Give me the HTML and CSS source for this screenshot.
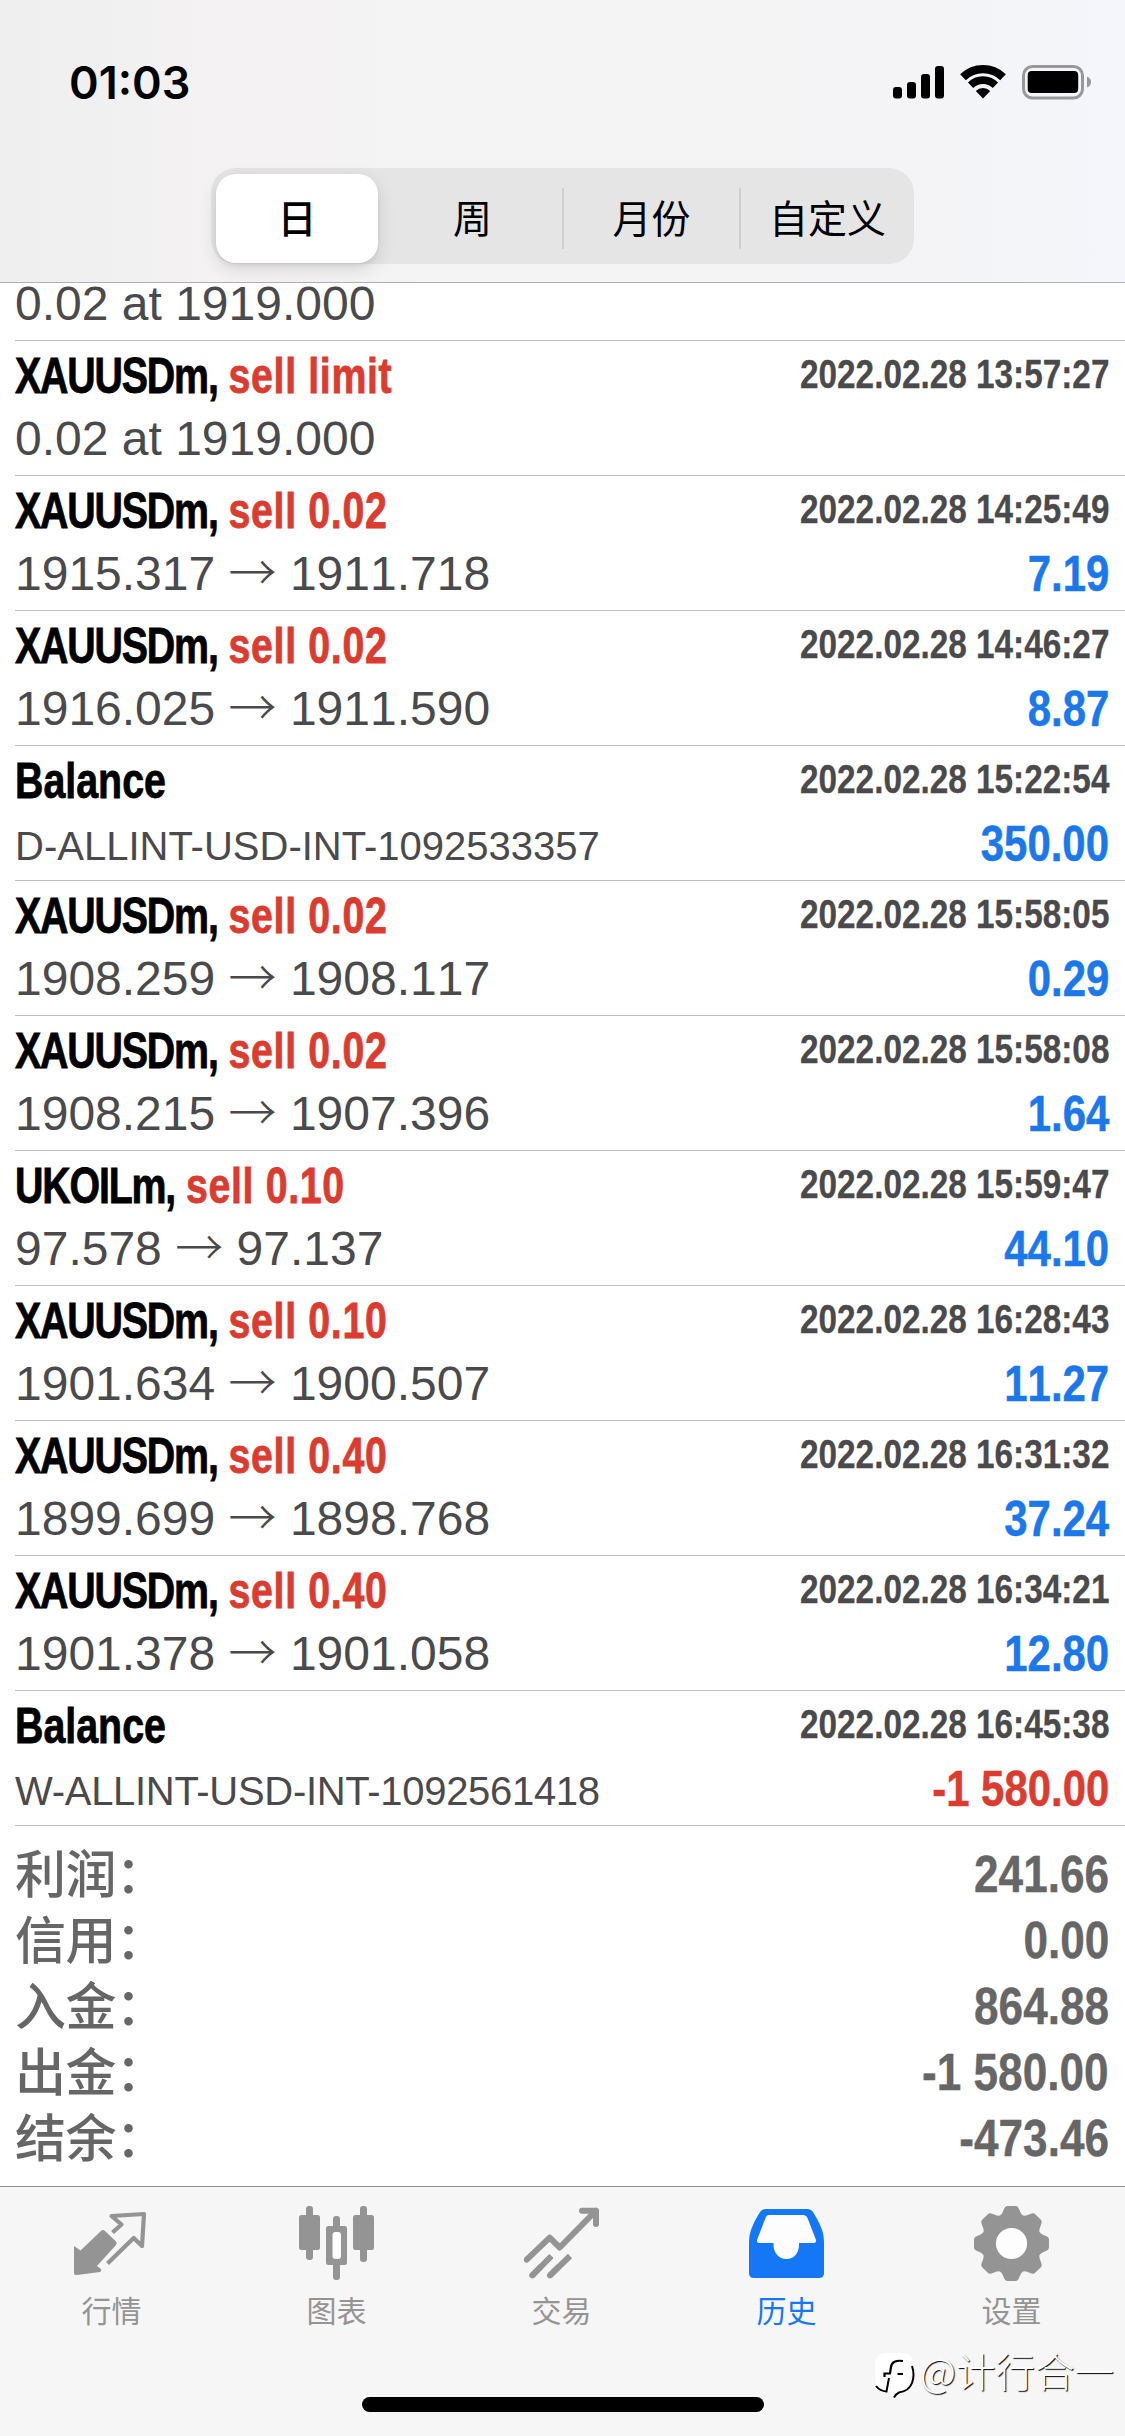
FILE: index.html
```html
<!DOCTYPE html>
<html lang="zh-CN">
<head>
<meta charset="utf-8">
<title>历史</title>
<link rel="stylesheet" href="styles.css">
</head>
<body>
<div class="screen">
  <header class="header">
    <div class="status">
      <span class="clock">01:03</span>
      <svg class="status-icons" width="200" height="35" viewBox="0 0 200 35">
        <rect x="0" y="22" width="9" height="11.500" rx="3"/>
        <rect x="14" y="17" width="9" height="16.500" rx="3"/>
        <rect x="28" y="9" width="9" height="24.500" rx="3"/>
        <rect x="42" y="1" width="9" height="32.500" rx="3"/>
        <g fill="none" stroke="#000">
          <path stroke-width="8.200" d="M70 12.300A28.800 28.800 0 0 1 110 12.300"/>
          <path stroke-width="7.600" d="M77.600 20.200A17.800 17.800 0 0 1 102.400 20.200"/>
        </g>
        <path d="M90 33.500L82.800 26A10.300 10.300 0 0 1 97.200 26Z"/>
        <rect x="130.500" y="1.500" width="59" height="31.500" rx="9" fill="none" stroke="#98989a" stroke-width="3"/>
        <rect x="134.700" y="6" width="50.500" height="22" rx="4"/>
        <path d="M194 11.500Q198 13 198 17T194 22.500Z" fill="#98989a"/>
      </svg>
    </div>
    <nav class="segments">
      <span class="segment active">日</span>
      <span class="segment">周</span>
      <span class="segment divided">月份</span>
      <span class="segment divided">自定义</span>
    </nav>
  </header>

  <main class="content">
    <ul class="deals">
      <li class="deal">
        <div class="top"></div>
        <div class="bottom"><span class="price">0.02 at 1919.000</span></div>
      </li>
      <li class="deal">
        <div class="top"><span class="title"><b>XAUUSDm,</b> <i>sell limit</i></span><time>2022.02.28 13:57:27</time></div>
        <div class="bottom"><span class="price">0.02 at 1919.000</span></div>
      </li>
      <li class="deal">
        <div class="top"><span class="title"><b>XAUUSDm,</b> <i>sell 0.02</i></span><time>2022.02.28 14:25:49</time></div>
        <div class="bottom"><span class="price">1915.317 <em>→</em> 1911.718</span><span class="value">7.19</span></div>
      </li>
      <li class="deal">
        <div class="top"><span class="title"><b>XAUUSDm,</b> <i>sell 0.02</i></span><time>2022.02.28 14:46:27</time></div>
        <div class="bottom"><span class="price">1916.025 <em>→</em> 1911.590</span><span class="value">8.87</span></div>
      </li>
      <li class="deal">
        <div class="top"><span class="title">Balance</span><time>2022.02.28 15:22:54</time></div>
        <div class="bottom"><span class="comment">D-ALLINT-USD-INT-1092533357</span><span class="value">350.00</span></div>
      </li>
      <li class="deal">
        <div class="top"><span class="title"><b>XAUUSDm,</b> <i>sell 0.02</i></span><time>2022.02.28 15:58:05</time></div>
        <div class="bottom"><span class="price">1908.259 <em>→</em> 1908.117</span><span class="value">0.29</span></div>
      </li>
      <li class="deal">
        <div class="top"><span class="title"><b>XAUUSDm,</b> <i>sell 0.02</i></span><time>2022.02.28 15:58:08</time></div>
        <div class="bottom"><span class="price">1908.215 <em>→</em> 1907.396</span><span class="value">1.64</span></div>
      </li>
      <li class="deal">
        <div class="top"><span class="title"><b>UKOILm,</b> <i>sell 0.10</i></span><time>2022.02.28 15:59:47</time></div>
        <div class="bottom"><span class="price">97.578 <em>→</em> 97.137</span><span class="value">44.10</span></div>
      </li>
      <li class="deal">
        <div class="top"><span class="title"><b>XAUUSDm,</b> <i>sell 0.10</i></span><time>2022.02.28 16:28:43</time></div>
        <div class="bottom"><span class="price">1901.634 <em>→</em> 1900.507</span><span class="value">11.27</span></div>
      </li>
      <li class="deal">
        <div class="top"><span class="title"><b>XAUUSDm,</b> <i>sell 0.40</i></span><time>2022.02.28 16:31:32</time></div>
        <div class="bottom"><span class="price">1899.699 <em>→</em> 1898.768</span><span class="value">37.24</span></div>
      </li>
      <li class="deal">
        <div class="top"><span class="title"><b>XAUUSDm,</b> <i>sell 0.40</i></span><time>2022.02.28 16:34:21</time></div>
        <div class="bottom"><span class="price">1901.378 <em>→</em> 1901.058</span><span class="value">12.80</span></div>
      </li>
      <li class="deal">
        <div class="top"><span class="title">Balance</span><time>2022.02.28 16:45:38</time></div>
        <div class="bottom"><span class="comment withdrawal">W-ALLINT-USD-INT-1092561418</span><span class="value loss">-1 580.00</span></div>
      </li>
    </ul>
    <dl class="summary">
      <div class="total"><dt>利润：</dt><dd>241.66</dd></div>
      <div class="total"><dt>信用：</dt><dd>0.00</dd></div>
      <div class="total"><dt>入金：</dt><dd>864.88</dd></div>
      <div class="total"><dt>出金：</dt><dd>-1 580.00</dd></div>
      <div class="total"><dt>结余：</dt><dd>-473.46</dd></div>
    </dl>
  </main>

  <footer class="footer">
    <nav class="tabs">
      <a class="tab">
        <svg width="75" height="75" viewBox="0 0 75 75">
          <path fill="currentColor" d="M0 40L6.500 44.500L27 25Q29 23 31 25L42 35.500Q43.500 37 42 39L23 60L27 63Q28 65 26 66L3 69Q0 69.500 0 67Z"/>
          <path fill="none" stroke="currentColor" stroke-width="4.200" stroke-linejoin="round" d="M38.500 26.500L47.500 18.500L37.500 10L70 8L68 40L59.700 32L33.500 57.500"/>
        </svg>
        <span>行情</span>
      </a>
      <a class="tab">
        <svg width="75" height="75" viewBox="0 0 75 75" fill="currentColor">
          <rect x="7" y="0" width="7" height="54" rx="3"/><rect x="0" y="9" width="21" height="35" rx="2.500"/>
          <rect x="34" y="10" width="7" height="64" rx="3"/><rect x="27" y="20" width="21" height="39" rx="2.500"/>
          <rect x="33.500" y="26" width="8.500" height="27" rx="3" fill="#fdfdfd"/>
          <rect x="61" y="0" width="7" height="56" rx="3"/><rect x="54" y="9" width="21" height="35" rx="2.500"/>
        </svg>
        <span>图表</span>
      </a>
      <a class="tab">
        <svg width="75" height="75" viewBox="24 16 75 75" fill="none" stroke="currentColor" stroke-width="6" stroke-linecap="round" stroke-linejoin="round">
          <path d="M26.700 69.700L49.700 47.700L59.700 57.500L96 20.700M82 20.700H96V34"/>
          <path stroke-linecap="butt" d="M32.300 85.300L51.500 66M50 85.300L70 66"/>
          <path d="M32.300 85.300L40 77.500M50 85.300L58 77.500"/>
        </svg>
        <span>交易</span>
      </a>
      <a class="tab current">
        <svg width="75" height="75" viewBox="0 -3 75 75">
          <path fill="currentColor" d="M17 0H58Q62 0 64 3C70 13 75 22 75 33V64Q75 69 70 69H5Q0 69 0 64V33C0 22 5 13 11 3Q13 0 17 0Z"/>
          <path fill="#fdfdfd" d="M20 6H54Q57 6 58.500 9L67 31Q67.500 34 64 34H50V36C50 44 45 50 37.500 50C30 50 24.500 44 24.500 36V34H11Q7.500 34 8 31L16.500 9Q17.500 6 20 6Z"/>
        </svg>
        <span>历史</span>
      </a>
      <a class="tab">
        <svg width="75" height="75" viewBox="-37.500 -37.500 75 75" fill="currentColor">
          <defs><path id="tooth" d="M-12.500 -26.500L-11 -28.500Q-9.500 -29.500 -8.800 -31.500L-7 -35.500Q-6 -37.500 -4 -37.500H4Q6 -37.500 7 -35.500L8.800 -31.500Q9.500 -29.500 11 -28.500L12.500 -26.500Z"/></defs>
          <circle r="29.500"/>
          <use href="#tooth"/><use href="#tooth" transform="rotate(45)"/><use href="#tooth" transform="rotate(90)"/><use href="#tooth" transform="rotate(135)"/>
          <use href="#tooth" transform="rotate(180)"/><use href="#tooth" transform="rotate(225)"/><use href="#tooth" transform="rotate(270)"/><use href="#tooth" transform="rotate(315)"/>
          <circle r="15.600" fill="#fdfdfd"/>
        </svg>
        <span>设置</span>
      </a>
    </nav>
    <div class="home-bar"></div>
  </footer>

  <div class="watermark">
    <svg width="42" height="50" viewBox="0 0 42 50">
      <path fill="#fff" d="M12 0H28Q38 0 38 12V28Q38 37 28 39Q22 40 20 45L16 39L10 38Q0 36 0 26V12Q0 0 12 0Z"/>
      <g fill="none" stroke="#000">
        <path stroke-width="2" d="M37 13Q40 22 37 30Q34 38 24 39.500Q21 41 19 44.500"/>
        <path stroke-width="2" d="M1 33Q5 38 11.500 38.500L14 25"/>
        <path stroke-width="2.200" d="M28 8Q17 6.500 16 14L15 20.500H9.500V24M22.500 21H28"/>
      </g>
    </svg>
    <span>@计行合一</span>
  </div>
</div>
</body>
</html>
```

FILE: styles.css
```css
* {
  box-sizing: border-box;
  margin: 0;
  padding: 0;
}

body {
  background: #fff;
  font-family: "Liberation Sans", "Noto Sans CJK SC", sans-serif;
}

.screen {
  position: relative;
  display: flex;
  flex-direction: column;
  width: 1125px;
  height: 2436px;
  overflow: hidden;
  background: #fff;
}

/* Status bar and period switch */
.header {
  height: 283px;
  flex: none;
  border-bottom: 1px solid #b0b0b1;
  background: linear-gradient(90deg, #efefef, #f4f2f3 20%, #f4f4f4 45%, #f4f4f6 80%, #f4f6fb);
}

.status {
  display: flex;
  justify-content: space-between;
  height: 168px;
  padding: 65px 32px 0 69px;
}

.clock {
  font: 600 45px/35px Inter, sans-serif;
}

.segments {
  display: grid;
  grid-template-columns: 172px 179px 177px 175px;
  width: 703px;
  height: 96px;
  margin-left: 211px;
  border-radius: 25px;
  background: #e5e5e6;
}

.segment {
  display: flex;
  align-items: center;
  justify-content: center;
  padding-bottom: 5px;
  font: 400 39px/56px "Noto Sans CJK SC", sans-serif;
}

.segment.divided {
  margin: 20px 0;
  border-left: 2px solid #d0d0d2;
}

.segment.active {
  margin: 6px 5px;
  border-radius: 20px;
  background: #fff;
  font-weight: 500;
  box-shadow: 0 6px 18px rgba(0, 0, 0, .12), 0 3px 4px rgba(0, 0, 0, .06);
}

/* Deal history */
.content {
  height: 1903px;
  flex: none;
  overflow: hidden;
}

.deals {
  margin: -77px 0 0 15px;
  list-style: none;
}

.deal {
  height: 135px;
  border-bottom: 1px solid #bfbfc1;
  padding-right: 16px;
  color: #4a4a4d;
}

.top,
.bottom {
  display: flex;
  justify-content: space-between;
  white-space: nowrap;
}

.top {
  height: 68px;
}

.bottom {
  height: 66px;
}

.title {
  transform: scaleX(.787);
  transform-origin: left;
  color: #000;
  font-size: 50px;
  font-weight: 700;
  line-height: 70px;
  -webkit-text-stroke: .8px;
}

.title b {
  letter-spacing: -1.5px;
}

.title i {
  color: #dc3c30;
  font-style: normal;
  letter-spacing: .8px;
}

time {
  transform: scaleX(.833);
  transform-origin: right;
  font-size: 40px;
  font-weight: 700;
  line-height: 67px;
  -webkit-text-stroke: .3px;
}

.price {
  font-size: 48px;
  font-kerning: none;
  line-height: 59px;
}

.price em {
  font-family: "Noto Sans CJK SC", sans-serif;
  font-style: normal;
  font-weight: 300;
  line-height: 1;
}

.comment {
  font-size: 40px;
  line-height: 64px;
}

.comment.withdrawal {
  letter-spacing: -.3px;
}

.value {
  transform: scaleX(.838);
  transform-origin: right;
  color: #1a78ec;
  font-size: 50px;
  font-weight: 700;
  line-height: 60px;
  font-kerning: none;
  -webkit-text-stroke: .5px;
}

.value.loss {
  color: #dc3c30;
}

/* Totals */
.summary {
  padding: 15px 16px 0 15px;
  color: #666;
}

.total {
  display: flex;
  justify-content: space-between;
  height: 66px;
}

.total dt {
  font: 500 51px/60px "Noto Sans CJK SC", sans-serif;
  letter-spacing: -.6px;
}

.total dd {
  transform: scaleX(.865);
  transform-origin: right;
  font-size: 51px;
  font-weight: 700;
  line-height: 68px;
  -webkit-text-stroke: .4px;
}

/* Tab bar */
.footer {
  display: flex;
  flex: 1;
  flex-direction: column;
  align-items: center;
  border-top: 1px solid #919192;
  background: #f6f6f6;
}

.tabs {
  display: flex;
  width: 1125px;
  height: 210px;
  padding-top: 19px;
}

.tab {
  display: flex;
  flex: 1;
  flex-direction: column;
  align-items: center;
  gap: 8px;
  padding-right: 2px;
  color: #949494;
  font: 400 30px/40px "Noto Sans CJK SC", sans-serif;
}

.tab.current {
  color: #1478f6;
}

.home-bar {
  width: 402px;
  height: 15px;
  border-radius: 8px;
  background: #000;
}

.watermark {
  position: absolute;
  top: 2353px;
  left: 875px;
  display: flex;
  gap: 3px;
  color: #fff;
  font: 300 39.500px/34px "Noto Sans CJK SC", sans-serif;
  text-shadow: 1px 1px 1px #000;
  white-space: nowrap;
}
```
